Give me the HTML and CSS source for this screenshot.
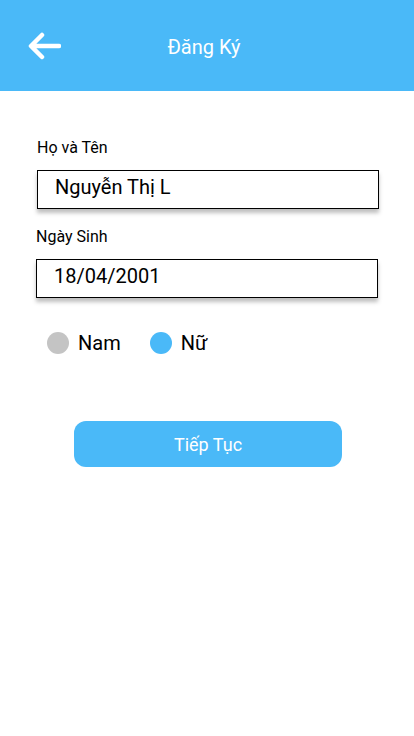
FILE: index.html
```html
<!DOCTYPE html>
<html lang="vi">
<head>
<meta charset="utf-8">
<link rel="stylesheet" href="styles.css">
</head>
<body>
<header class="topbar">
  <svg class="back" width="34" height="28" viewBox="0 0 34 28">
    <path d="M32 14H5M15 3L4 14L15 25" fill="none" stroke="#fff" stroke-width="4.5" stroke-linecap="round" stroke-linejoin="round"/>
  </svg>
  <h1 class="title">Đăng Ký</h1>
</header>
<main class="form">
  <div class="field field-name">
    <label class="label">Họ và Tên</label>
    <div class="input">Nguyễn Thị L</div>
  </div>
  <div class="field field-dob">
    <label class="label">Ngày Sinh</label>
    <div class="input">18/04/2001</div>
  </div>
  <div class="gender">
    <div class="option"><span class="dot dot-off"></span><span class="opt-text">Nam</span></div>
    <div class="option"><span class="dot dot-on"></span><span class="opt-text">Nữ</span></div>
  </div>
  <button class="btn">Tiếp Tục</button>
</main>
</body>
</html>
```
FILE: styles.css
```css
* { box-sizing: border-box; }
html, body { margin: 0; padding: 0; }
body {
  width: 414px;
  height: 736px;
  background: #fff;
  font-family: Roboto, "Noto Sans", sans-serif;
  color: #000;
  overflow: hidden;
}
.topbar {
  height: 91px;
  background: #4ab9f8;
  position: relative;
  display: flex;
  align-items: center;
  justify-content: center;
}
.back {
  position: absolute;
  left: 27px;
  top: 32px;
}
.title {
  margin: 0;
  color: #fff;
  font-weight: 400;
  font-size: 20px;
  padding-top: 2px;
  padding-right: 6px;
}
.form {
  display: flex;
  flex-direction: column;
  padding-top: 46px;
}
.field { display: flex; flex-direction: column; }
.field-name { padding-left: 37px; width: 379px; }
.field-dob { padding-left: 36px; width: 378px; margin-top: 17px; }
.label {
  font-size: 16px;
  line-height: 21px;
  margin-bottom: 12px;
}
.input {
  height: 39px;
  border: 1px solid #000;
  box-shadow: 0 4px 4px rgba(0,0,0,0.25);
  font-size: 20px;
  line-height: 30px;
  padding-left: 17px;
  padding-top: 1px;
}
.gender {
  display: flex;
  align-items: center;
  padding-left: 47px;
  margin-top: 33px;
  gap: 29px;
}
.option { display: flex; align-items: center; gap: 9px; }
.dot { width: 22px; height: 22px; border-radius: 50%; display: block; }
.dot-off { background: #c4c4c4; }
.dot-on { background: #4ab9f8; }
.opt-text { font-size: 20px; line-height: 24px; }
.btn {
  align-self: flex-start;
  margin-left: 74px;
  margin-top: 66px;
  width: 268px;
  height: 46px;
  border: none;
  border-radius: 12px;
  background: #4ab9f8;
  color: #fff;
  font-family: Roboto, "Noto Sans", sans-serif;
  font-size: 18px;
  padding: 0;
}
```
